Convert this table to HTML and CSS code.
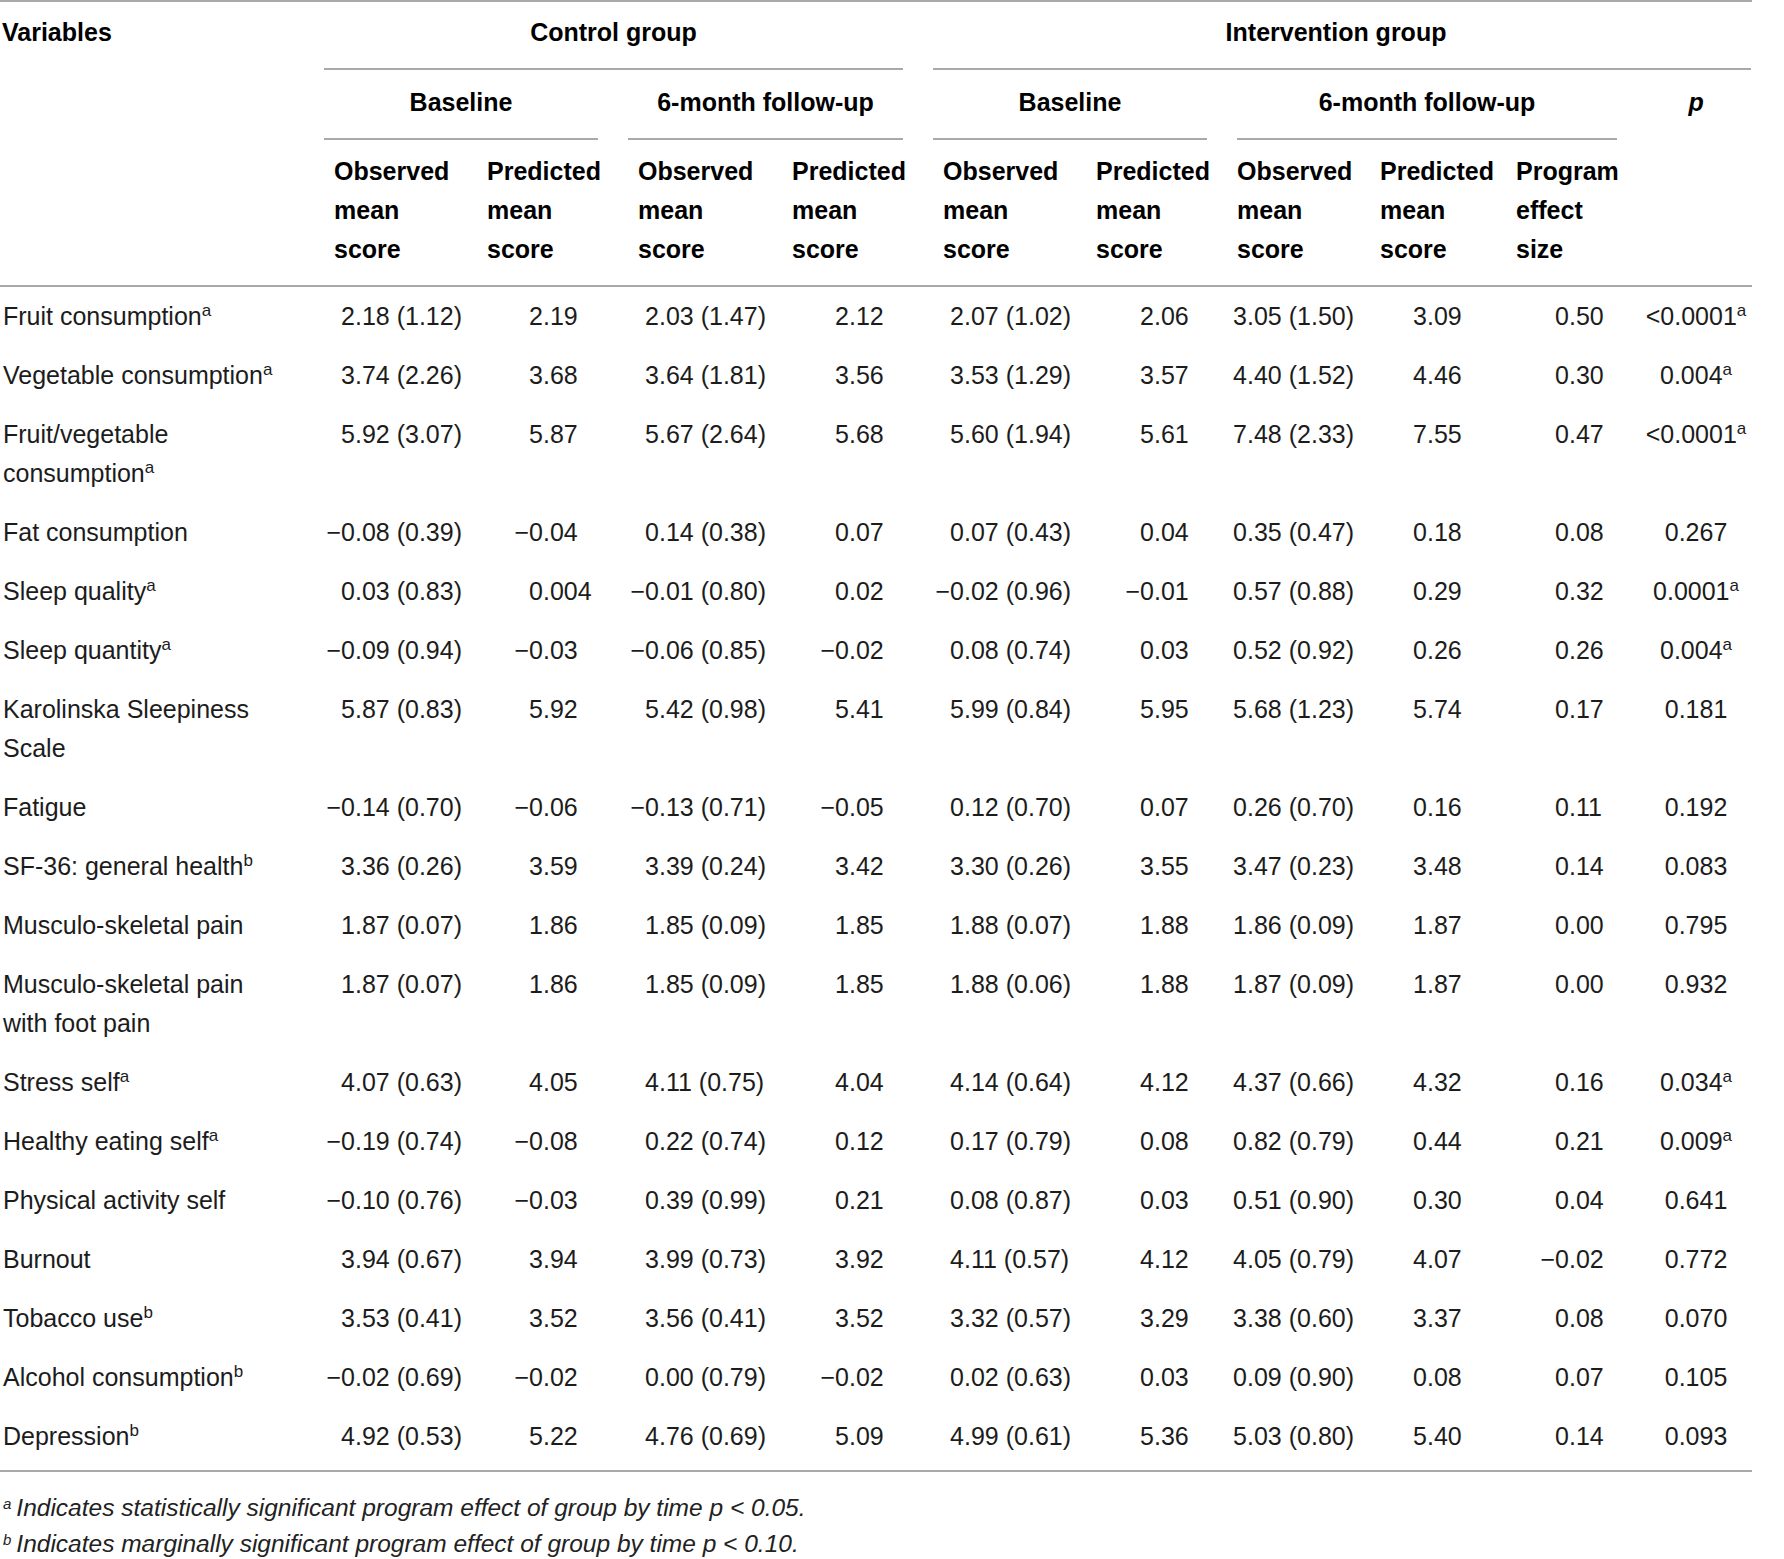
FILE: index.html
```html
<!DOCTYPE html>
<html lang="en">
<head>
<meta charset="utf-8">
<title>Program effects table</title>
<link rel="stylesheet" href="styles.css">
</head>
<body>
<table class="tbl">
  <colgroup>
    <col class="w0"><col class="w1"><col class="w2"><col class="w3"><col class="w4"><col class="w5"><col class="w6"><col class="w7"><col class="w8"><col class="w9"><col class="w10">
  </colgroup>
  <thead>
    <tr class="h1">
      <th class="var">Variables</th>
      <th colspan="4"><div class="grp gap">Control group</div></th>
      <th colspan="6"><div class="grp gend">Intervention group</div></th>
    </tr>
    <tr class="h2">
      <th></th>
      <th colspan="2"><div class="grp gap">Baseline</div></th>
      <th colspan="2"><div class="grp gap">6-month follow-up</div></th>
      <th colspan="2"><div class="grp gap">Baseline</div></th>
      <th colspan="3"><div class="grp gap3">6-month follow-up</div></th>
      <th class="pcell"><i>p</i></th>
    </tr>
    <tr class="h3">
      <th></th>
      <th>Observed<br>mean<br>score</th>
      <th>Predicted<br>mean<br>score</th>
      <th>Observed<br>mean<br>score</th>
      <th>Predicted<br>mean<br>score</th>
      <th>Observed<br>mean<br>score</th>
      <th>Predicted<br>mean<br>score</th>
      <th class="s0">Observed<br>mean<br>score</th>
      <th>Predicted<br>mean<br>score</th>
      <th class="s6">Program<br>effect<br>size</th>
      <th></th>
    </tr>
  </thead>
  <tbody>
    <tr><td>Fruit consumption<sup>a</sup></td><td><span class="ip">2</span>.18 (1.12)</td><td><span class="ip">2</span>.19</td><td><span class="ip">2</span>.03 (1.47)</td><td><span class="ip">2</span>.12</td><td><span class="ip">2</span>.07 (1.02)</td><td><span class="ip">2</span>.06</td><td><span class="ip">3</span>.05 (1.50)</td><td><span class="ip">3</span>.09</td><td><span class="ip">0</span>.50</td><td class="p">&lt;0.0001<sup>a</sup></td></tr>
    <tr><td>Vegetable consumption<sup>a</sup></td><td><span class="ip">3</span>.74 (2.26)</td><td><span class="ip">3</span>.68</td><td><span class="ip">3</span>.64 (1.81)</td><td><span class="ip">3</span>.56</td><td><span class="ip">3</span>.53 (1.29)</td><td><span class="ip">3</span>.57</td><td><span class="ip">4</span>.40 (1.52)</td><td><span class="ip">4</span>.46</td><td><span class="ip">0</span>.30</td><td class="p">0.004<sup>a</sup></td></tr>
    <tr><td>Fruit/vegetable<br>consumption<sup>a</sup></td><td><span class="ip">5</span>.92 (3.07)</td><td><span class="ip">5</span>.87</td><td><span class="ip">5</span>.67 (2.64)</td><td><span class="ip">5</span>.68</td><td><span class="ip">5</span>.60 (1.94)</td><td><span class="ip">5</span>.61</td><td><span class="ip">7</span>.48 (2.33)</td><td><span class="ip">7</span>.55</td><td><span class="ip">0</span>.47</td><td class="p">&lt;0.0001<sup>a</sup></td></tr>
    <tr><td>Fat consumption</td><td><span class="ip">−0</span>.08 (0.39)</td><td><span class="ip">−0</span>.04</td><td><span class="ip">0</span>.14 (0.38)</td><td><span class="ip">0</span>.07</td><td><span class="ip">0</span>.07 (0.43)</td><td><span class="ip">0</span>.04</td><td><span class="ip">0</span>.35 (0.47)</td><td><span class="ip">0</span>.18</td><td><span class="ip">0</span>.08</td><td class="p">0.267</td></tr>
    <tr><td>Sleep quality<sup>a</sup></td><td><span class="ip">0</span>.03 (0.83)</td><td><span class="ip">0</span>.004</td><td><span class="ip">−0</span>.01 (0.80)</td><td><span class="ip">0</span>.02</td><td><span class="ip">−0</span>.02 (0.96)</td><td><span class="ip">−0</span>.01</td><td><span class="ip">0</span>.57 (0.88)</td><td><span class="ip">0</span>.29</td><td><span class="ip">0</span>.32</td><td class="p">0.0001<sup>a</sup></td></tr>
    <tr><td>Sleep quantity<sup>a</sup></td><td><span class="ip">−0</span>.09 (0.94)</td><td><span class="ip">−0</span>.03</td><td><span class="ip">−0</span>.06 (0.85)</td><td><span class="ip">−0</span>.02</td><td><span class="ip">0</span>.08 (0.74)</td><td><span class="ip">0</span>.03</td><td><span class="ip">0</span>.52 (0.92)</td><td><span class="ip">0</span>.26</td><td><span class="ip">0</span>.26</td><td class="p">0.004<sup>a</sup></td></tr>
    <tr><td>Karolinska Sleepiness<br>Scale</td><td><span class="ip">5</span>.87 (0.83)</td><td><span class="ip">5</span>.92</td><td><span class="ip">5</span>.42 (0.98)</td><td><span class="ip">5</span>.41</td><td><span class="ip">5</span>.99 (0.84)</td><td><span class="ip">5</span>.95</td><td><span class="ip">5</span>.68 (1.23)</td><td><span class="ip">5</span>.74</td><td><span class="ip">0</span>.17</td><td class="p">0.181</td></tr>
    <tr><td>Fatigue</td><td><span class="ip">−0</span>.14 (0.70)</td><td><span class="ip">−0</span>.06</td><td><span class="ip">−0</span>.13 (0.71)</td><td><span class="ip">−0</span>.05</td><td><span class="ip">0</span>.12 (0.70)</td><td><span class="ip">0</span>.07</td><td><span class="ip">0</span>.26 (0.70)</td><td><span class="ip">0</span>.16</td><td><span class="ip">0</span>.11</td><td class="p">0.192</td></tr>
    <tr><td>SF-36: general health<sup>b</sup></td><td><span class="ip">3</span>.36 (0.26)</td><td><span class="ip">3</span>.59</td><td><span class="ip">3</span>.39 (0.24)</td><td><span class="ip">3</span>.42</td><td><span class="ip">3</span>.30 (0.26)</td><td><span class="ip">3</span>.55</td><td><span class="ip">3</span>.47 (0.23)</td><td><span class="ip">3</span>.48</td><td><span class="ip">0</span>.14</td><td class="p">0.083</td></tr>
    <tr><td>Musculo-skeletal pain</td><td><span class="ip">1</span>.87 (0.07)</td><td><span class="ip">1</span>.86</td><td><span class="ip">1</span>.85 (0.09)</td><td><span class="ip">1</span>.85</td><td><span class="ip">1</span>.88 (0.07)</td><td><span class="ip">1</span>.88</td><td><span class="ip">1</span>.86 (0.09)</td><td><span class="ip">1</span>.87</td><td><span class="ip">0</span>.00</td><td class="p">0.795</td></tr>
    <tr><td>Musculo-skeletal pain<br>with foot pain</td><td><span class="ip">1</span>.87 (0.07)</td><td><span class="ip">1</span>.86</td><td><span class="ip">1</span>.85 (0.09)</td><td><span class="ip">1</span>.85</td><td><span class="ip">1</span>.88 (0.06)</td><td><span class="ip">1</span>.88</td><td><span class="ip">1</span>.87 (0.09)</td><td><span class="ip">1</span>.87</td><td><span class="ip">0</span>.00</td><td class="p">0.932</td></tr>
    <tr><td>Stress self<sup>a</sup></td><td><span class="ip">4</span>.07 (0.63)</td><td><span class="ip">4</span>.05</td><td><span class="ip">4</span>.11 (0.75)</td><td><span class="ip">4</span>.04</td><td><span class="ip">4</span>.14 (0.64)</td><td><span class="ip">4</span>.12</td><td><span class="ip">4</span>.37 (0.66)</td><td><span class="ip">4</span>.32</td><td><span class="ip">0</span>.16</td><td class="p">0.034<sup>a</sup></td></tr>
    <tr><td>Healthy eating self<sup>a</sup></td><td><span class="ip">−0</span>.19 (0.74)</td><td><span class="ip">−0</span>.08</td><td><span class="ip">0</span>.22 (0.74)</td><td><span class="ip">0</span>.12</td><td><span class="ip">0</span>.17 (0.79)</td><td><span class="ip">0</span>.08</td><td><span class="ip">0</span>.82 (0.79)</td><td><span class="ip">0</span>.44</td><td><span class="ip">0</span>.21</td><td class="p">0.009<sup>a</sup></td></tr>
    <tr><td>Physical activity self</td><td><span class="ip">−0</span>.10 (0.76)</td><td><span class="ip">−0</span>.03</td><td><span class="ip">0</span>.39 (0.99)</td><td><span class="ip">0</span>.21</td><td><span class="ip">0</span>.08 (0.87)</td><td><span class="ip">0</span>.03</td><td><span class="ip">0</span>.51 (0.90)</td><td><span class="ip">0</span>.30</td><td><span class="ip">0</span>.04</td><td class="p">0.641</td></tr>
    <tr><td>Burnout</td><td><span class="ip">3</span>.94 (0.67)</td><td><span class="ip">3</span>.94</td><td><span class="ip">3</span>.99 (0.73)</td><td><span class="ip">3</span>.92</td><td><span class="ip">4</span>.11 (0.57)</td><td><span class="ip">4</span>.12</td><td><span class="ip">4</span>.05 (0.79)</td><td><span class="ip">4</span>.07</td><td><span class="ip">−0</span>.02</td><td class="p">0.772</td></tr>
    <tr><td>Tobacco use<sup>b</sup></td><td><span class="ip">3</span>.53 (0.41)</td><td><span class="ip">3</span>.52</td><td><span class="ip">3</span>.56 (0.41)</td><td><span class="ip">3</span>.52</td><td><span class="ip">3</span>.32 (0.57)</td><td><span class="ip">3</span>.29</td><td><span class="ip">3</span>.38 (0.60)</td><td><span class="ip">3</span>.37</td><td><span class="ip">0</span>.08</td><td class="p">0.070</td></tr>
    <tr><td>Alcohol consumption<sup>b</sup></td><td><span class="ip">−0</span>.02 (0.69)</td><td><span class="ip">−0</span>.02</td><td><span class="ip">0</span>.00 (0.79)</td><td><span class="ip">−0</span>.02</td><td><span class="ip">0</span>.02 (0.63)</td><td><span class="ip">0</span>.03</td><td><span class="ip">0</span>.09 (0.90)</td><td><span class="ip">0</span>.08</td><td><span class="ip">0</span>.07</td><td class="p">0.105</td></tr>
    <tr><td>Depression<sup>b</sup></td><td><span class="ip">4</span>.92 (0.53)</td><td><span class="ip">5</span>.22</td><td><span class="ip">4</span>.76 (0.69)</td><td><span class="ip">5</span>.09</td><td><span class="ip">4</span>.99 (0.61)</td><td><span class="ip">5</span>.36</td><td><span class="ip">5</span>.03 (0.80)</td><td><span class="ip">5</span>.40</td><td><span class="ip">0</span>.14</td><td class="p">0.093</td></tr>
  </tbody>
</table>
<div class="notes">
  <p><sup>a</sup>Indicates statistically significant program effect of group by time p &lt; 0.05.</p>
  <p><sup>b</sup>Indicates marginally significant program effect of group by time p &lt; 0.10.</p>
</div>
</body>
</html>
```

FILE: styles.css
```css
html, body {
  margin: 0;
  padding: 0;
  background: #ffffff;
}

body {
  font-family: "Liberation Sans", Arial, sans-serif;
  color: #1c1c1c;
}

.tbl {
  border-collapse: collapse;
  table-layout: fixed;
  width: 1752px;
  border-top: 2px solid #a9a9a9;
}

.w0 { width: 324px; }
.w1 { width: 153px; }
.w2 { width: 151px; }
.w3 { width: 154px; }
.w4 { width: 151px; }
.w5 { width: 153px; }
.w6 { width: 151px; }
.w7 { width: 133px; }
.w8 { width: 140px; }
.w9 { width: 110px; }
.w10 { width: 132px; }

th {
  font-size: 25px;
  line-height: 39px;
  font-weight: bold;
  color: #000;
  text-align: left;
  vertical-align: top;
  padding: 0;
  white-space: nowrap;
}

.h1 .var {
  padding: 11px 0 0 2px;
}

.grp {
  text-align: center;
  border-bottom: 2px solid #a9a9a9;
}

.h1 .grp {
  padding: 11px 0 16px;
}

.h2 .grp {
  padding: 13px 0 16px;
}

.gap { margin-right: 30px; }
.gap3 { margin-right: 3px; }
.gend { margin-right: 1px; padding-right: 12px !important; }

.pcell {
  text-align: center;
  padding: 13px 0 0 20px;
}

.h3 th {
  padding: 12px 0 16px 10px;
  line-height: 39px;
  border-bottom: 2px solid #a9a9a9;
}

.h3 th.s0 { padding-left: 0; }
.h3 th.s6 { padding-left: 6px; }

tbody td {
  font-size: 25px;
  line-height: 39px;
  padding: 10px 0;
  vertical-align: top;
  white-space: nowrap;
  text-align: left;
}

tbody tr:last-child td {
  padding-bottom: 14px;
  border-bottom: 2px solid #a9a9a9;
}

tbody td:nth-child(1) { padding-left: 3px; }
tbody td:nth-child(2) { padding-left: 31px; }
tbody td:nth-child(3) { padding-left: 66px; }
tbody td:nth-child(4) { padding-left: 31px; }
tbody td:nth-child(5) { padding-left: 67px; }
tbody td:nth-child(6) { padding-left: 31px; }
tbody td:nth-child(7) { padding-left: 68px; }
tbody td:nth-child(8) { padding-left: 10px; }
tbody td:nth-child(9) { padding-left: 57px; }
tbody td:nth-child(10) { padding-left: 59px; }

tbody td.p {
  text-align: center;
  padding-left: 20px;
}

.ip {
  display: inline-block;
  width: 60px;
  margin-left: -60px;
  text-align: right;
}

sup {
  font-size: 17px;
  line-height: 0;
  vertical-align: 9px;
}

.notes {
  padding-top: 18px;
  font-style: italic;
  font-size: 24.5px;
  line-height: 36px;
  color: #222;
}

.notes p {
  margin: 0;
  padding-left: 3px;
}

.notes sup {
  font-size: 15px;
  vertical-align: 7px;
  margin-right: 5px;
}
```
